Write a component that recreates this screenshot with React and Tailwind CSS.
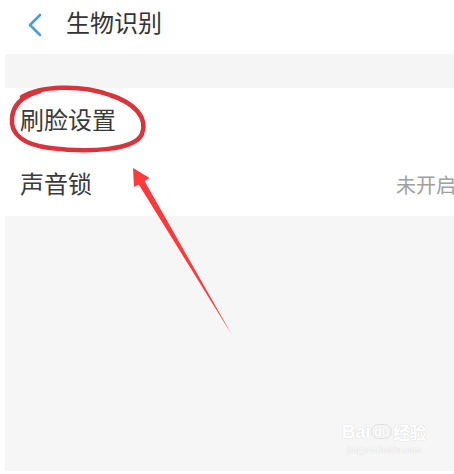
import React from 'react';

const font = { fontFamily: '"Noto Sans CJK SC", "Noto Sans", sans-serif' };

const Row = ({ label, value }) => (
    <div className="h-[64px] flex items-center justify-between pl-[20px] bg-white">
        <span className="text-[24px] text-[#3a3a3a] leading-none -mt-[3px]">{label}</span>
        {value && <span className="text-[20px] text-[#a0a0a0] leading-none whitespace-nowrap -mr-[2px] mt-[1px]">{value}</span>}
    </div>
);

const App = () => {
    return (
        <div className="relative w-[454px] h-[474px] bg-white overflow-hidden flex flex-col" style={font}>
            {/* header */}
            <div className="h-[54px] flex items-center shrink-0">
                <svg width="20" height="26" viewBox="0 0 20 26" className="ml-[25px] -mt-[4px]">
                    <path d="M15 3 L5 13 L15 23" fill="none" stroke="#4a9bd6" strokeWidth="2.6" strokeLinecap="round" strokeLinejoin="round" />
                </svg>
                <span className="ml-[21px] text-[24px] text-[#333] leading-none -mt-[10px]">生物识别</span>
            </div>

            <div className="ml-[5px] h-[34px] bg-[#f5f5f5] shrink-0" />

            <Row label="刷脸设置" />
            <Row label="声音锁" value="未开启" />

            <div className="ml-[5px] flex-1 bg-[#f6f6f6] mb-[3px] flex items-end justify-end pr-[28px] pb-[16px]">
                <div className="flex flex-col items-center text-white [text-shadow:0_0_1px_#d6d6d6,0_0_1px_#d6d6d6]">
                    <div className="flex items-center font-bold text-[19px] leading-none tracking-tight" style={{ fontFamily: '"Liberation Sans", "Noto Sans CJK SC", sans-serif' }}>
                        <span>Bai</span>
                        <span className="mx-[1px] rounded-full border border-[#dedede] px-[2px] text-[13px]">du</span>
                        <span className="text-[17px]" style={font}>经验</span>
                    </div>
                    <span className="text-[10px] leading-none mt-[4px]" style={{ fontFamily: '"Liberation Serif", serif' }}>jingyan.baidu.com</span>
                </div>
            </div>

            {/* annotations */}
            <svg className="absolute left-0 top-0 pointer-events-none" width="454" height="474" viewBox="0 0 454 474">
                <path
                    d="M22 97 C40 86, 80 84, 110 95 C135 103, 148 118, 142 134 C135 150, 90 153, 50 148 C25 145, 10 135, 12 118 C13 105, 22 96, 40 91"
                    fill="none"
                    stroke="#d8343c"
                    strokeWidth="4.5"
                    strokeLinecap="round"
                />
                <polygon points="133,168 149.5,178 144.5,181 232,335 138.7,184.4 134,187" fill="#ff3a3a" />
            </svg>
        </div>
    );
};

export default App;
